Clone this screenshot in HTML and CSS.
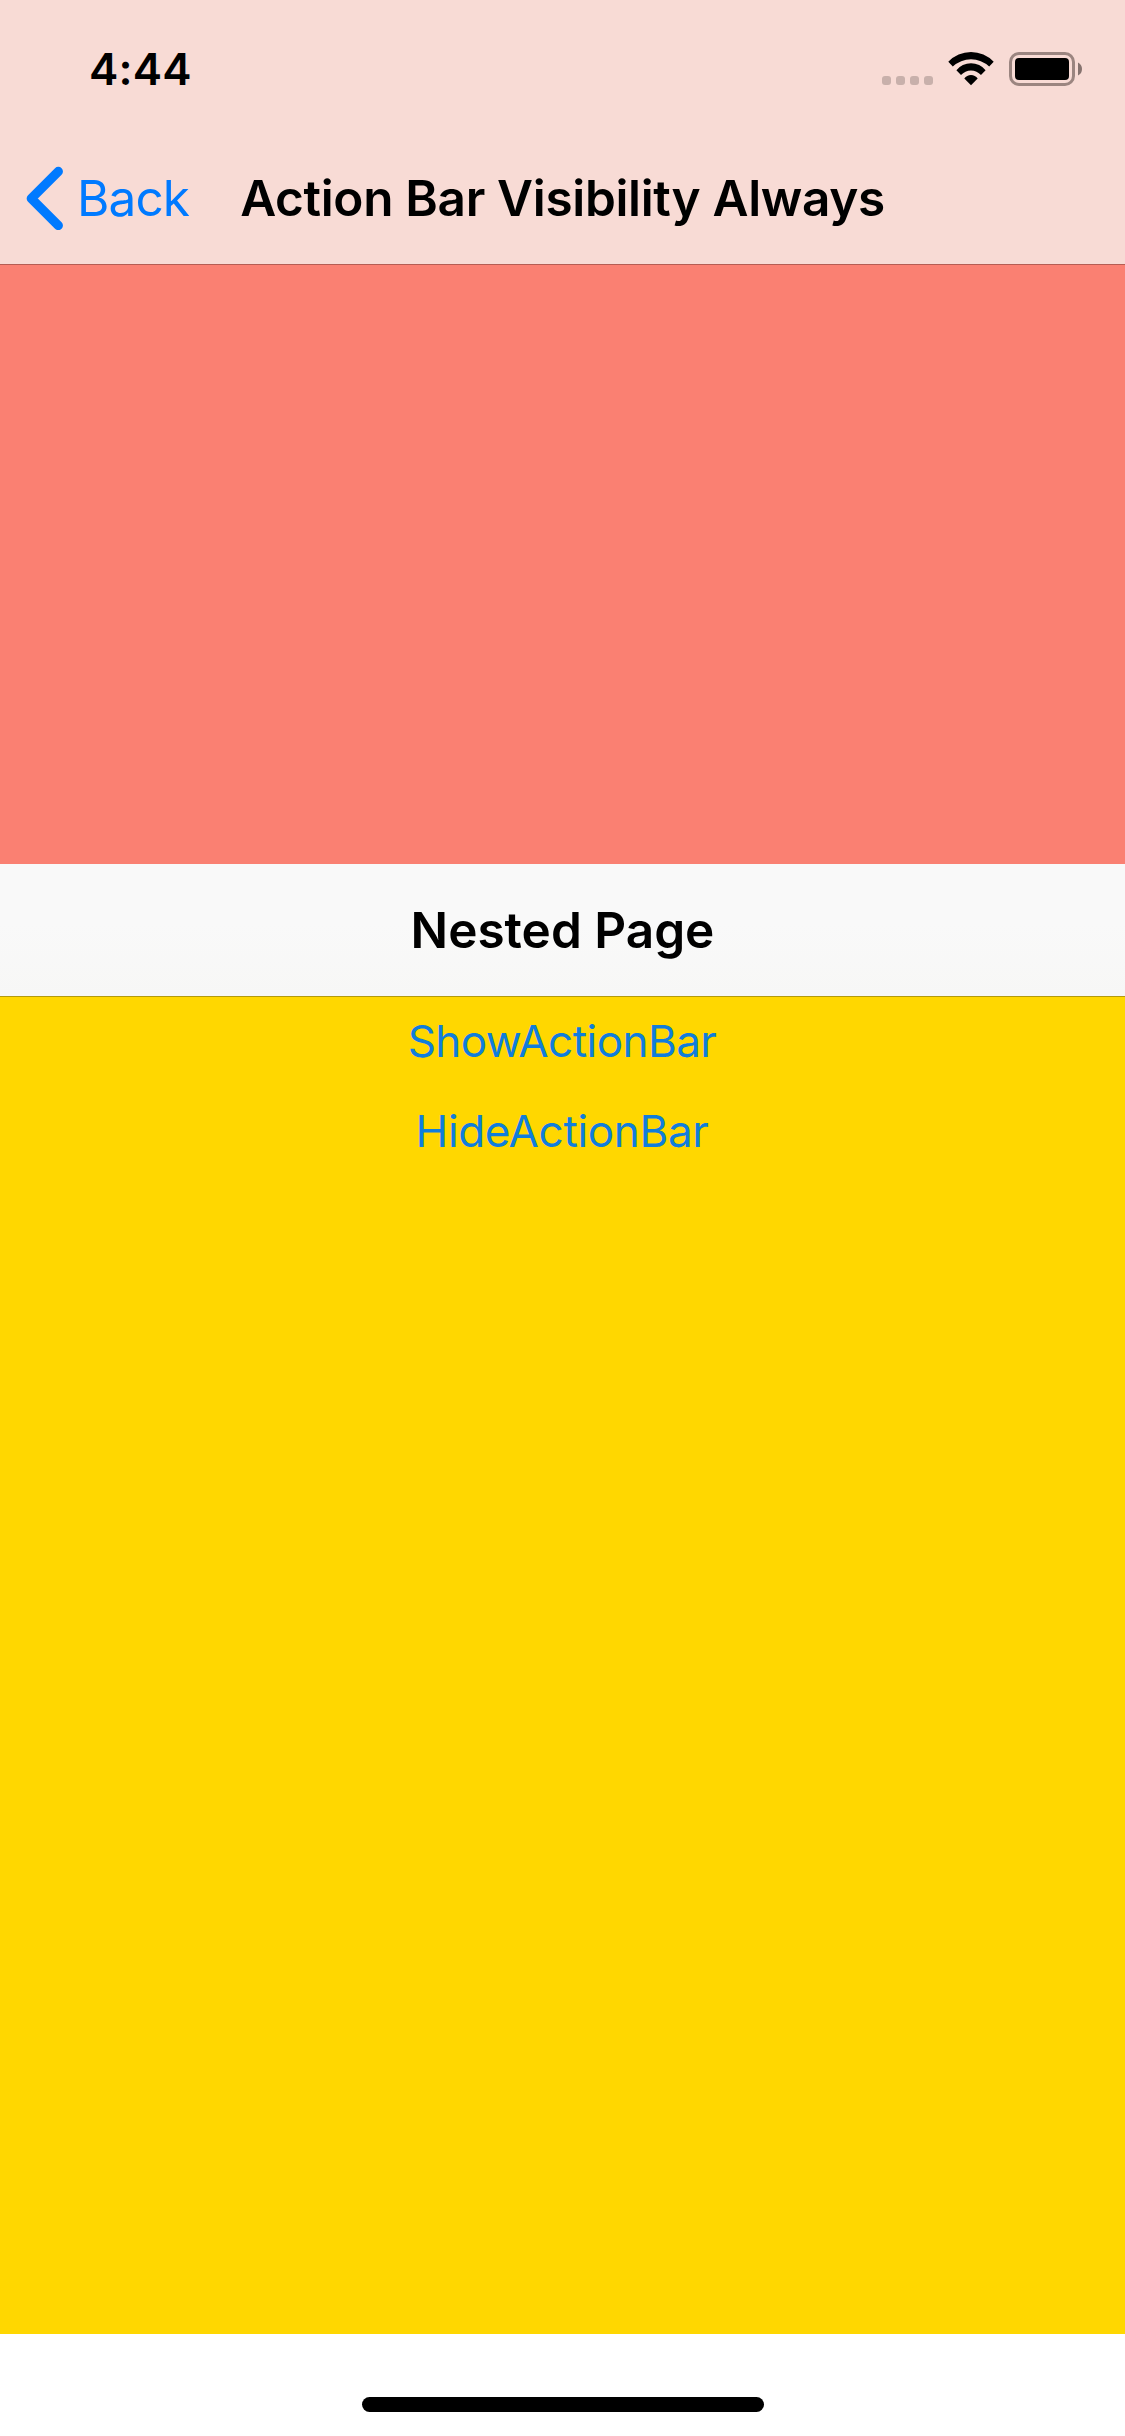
FILE: index.html
```html
<!DOCTYPE html>
<html lang="en">
<head>
<meta charset="utf-8">
<title>Action Bar Visibility Always</title>
<link rel="stylesheet" href="styles.css">
</head>
<body>
<div class="screen">
  <header class="header">
    <div class="status-bar">
      <span class="time">4:44</span>
      <div class="status-icons">
        <svg class="signal" width="51" height="10" viewBox="0 0 51 10" aria-hidden="true">
          <rect x="0" y="0" width="9" height="9" rx="3"/>
          <rect x="14" y="0" width="9" height="9" rx="3"/>
          <rect x="28" y="0" width="9" height="9" rx="3"/>
          <rect x="42" y="0" width="9" height="9" rx="3"/>
        </svg>
        <svg class="wifi" width="46" height="34" viewBox="0 0 46 34" aria-hidden="true">
          <path d="M0.3 9.8A31.2 31.2 0 0 1 45.7 9.8L41.2 14.5A26.6 26.6 0 0 0 4.8 14.5Z"/>
          <path d="M8.4 18.2A18.7 18.7 0 0 1 37.6 18.2L33 22.9A13.6 13.6 0 0 0 13 22.9Z"/>
          <path d="M16.3 26.4A8.3 8.3 0 0 1 29.7 26.4L23 33.2Z"/>
        </svg>
        <svg class="battery" width="74" height="34" viewBox="0 0 74 34" aria-hidden="true">
          <rect class="battery-case" x="1.5" y="1.5" width="63" height="31" rx="8.5"/>
          <rect x="6" y="6" width="54" height="22" rx="4"/>
          <path class="battery-cap" d="M69 10.5Q73 12.5 73 17Q73 21.5 69 23.5Z"/>
        </svg>
      </div>
    </div>
    <nav class="nav-bar">
      <a class="back">
        <svg width="38" height="64" viewBox="0 0 38 64" aria-hidden="true"><path d="M33.3 5.5L6.3 32.5L33.3 59.5"/></svg>
        <span>Back</span>
      </a>
      <h1 class="title page-title">Action Bar Visibility Always</h1>
    </nav>
  </header>
  <section class="outer-page"></section>
  <header class="nested-bar"><h2 class="title">Nested Page</h2></header>
  <main class="nested-page">
    <button class="action show">ShowActionBar</button>
    <button class="action hide">HideActionBar</button>
  </main>
  <footer class="home-area"><div class="home-indicator"></div></footer>
</div>
</body>
</html>
```
FILE: styles.css
```css
* { box-sizing: border-box; }

body {
  margin: 0;
  background: #fff;
  font-family: Inter, "Liberation Sans", sans-serif;
}

.screen {
  display: flex;
  flex-direction: column;
  width: 1125px;
  height: 2436px;
}

.header {
  height: 265px;
  background: #f8dbd5;
  border-bottom: 1px solid #b55d53;
}

.status-bar {
  display: flex;
  justify-content: space-between;
  height: 132px;
  padding: 0 42px 0 89px;
}

.time {
  height: 138px;
  line-height: 138px;
  font-size: 44px;
  font-weight: 600;
  letter-spacing: 0.2px;
}

.status-icons {
  display: flex;
  align-items: flex-end;
  height: 86px;
}

.signal { fill: #c8b0ab; }
.wifi { margin-left: 15px; }
.battery { margin-left: 15px; }
.battery-case { fill: none; stroke: #9b8580; stroke-width: 3; }
.battery-cap { fill: #86736f; }

.nav-bar {
  display: grid;
  grid-template-columns: 240px 645px 240px;
  align-items: center;
  height: 132px;
}

.back {
  display: flex;
  align-items: center;
  padding-left: 25px;
  color: #007aff;
  font-size: 49.5px;
  letter-spacing: -0.9px;
}

.back svg {
  flex: none;
  margin-right: 14px;
  fill: none;
  stroke: #007aff;
  stroke-width: 9.3;
  stroke-linecap: round;
  stroke-linejoin: round;
}

.title {
  margin: 0;
  font-size: 49.5px;
  font-weight: 600;
  line-height: 60px;
  text-align: center;
  white-space: nowrap;
}

.page-title { letter-spacing: -0.33px; }

.outer-page {
  height: 599px;
  background: #fa8072;
}

.nested-bar {
  display: flex;
  align-items: center;
  justify-content: center;
  height: 133px;
  background: linear-gradient(#f9f9f9 45%, #f7f7f6);
  border-bottom: 1px solid #b39a0e;
}

.nested-page {
  display: flex;
  flex-direction: column;
  height: 1337px;
  background: #ffd700;
}

.action {
  height: 90px;
  margin: 0;
  padding: 0 1px 2px 0;
  border: 0;
  background: none;
  color: #107ddc;
  font: 400 44px Inter, "Liberation Sans", sans-serif;
}

.show { letter-spacing: -0.55px; }
.hide { letter-spacing: -0.35px; }

.home-area {
  display: flex;
  justify-content: center;
  height: 102px;
  padding-top: 63px;
}

.home-indicator {
  width: 402px;
  height: 15px;
  border-radius: 8px;
  background: #000;
}
```
